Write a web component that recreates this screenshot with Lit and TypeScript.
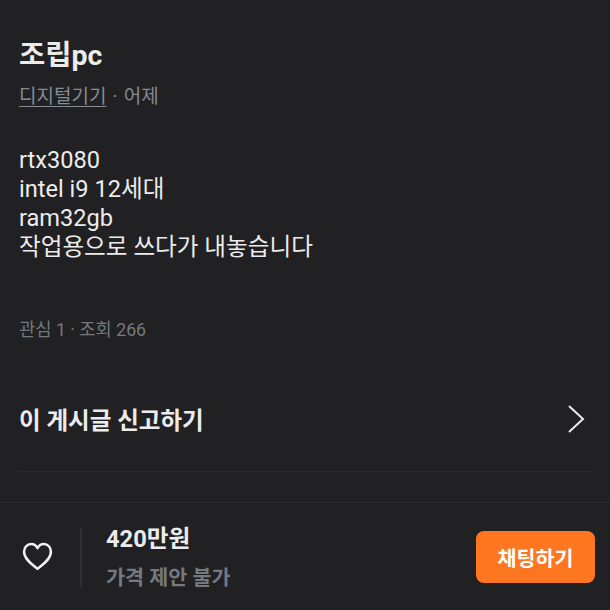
import { LitElement, html, css } from 'lit';
import { customElement } from 'lit/decorators.js';

@customElement('app-root')
export class AppRoot extends LitElement {
  static styles = css`
    :host {
      display: block;
      width: 610px;
      height: 610px;
      background: #212123;
      color: #ececed;
      font-family: Roboto, 'Noto Sans CJK KR', sans-serif;
      overflow: hidden;
    }
    .page {
      height: 610px;
      display: flex;
      flex-direction: column;
    }
    .content {
      flex: 1;
      padding: 38px 16px 0 19px;
      display: flex;
      flex-direction: column;
    }
    h1 {
      margin: 0;
      font-size: 28.5px;
      line-height: 36px;
      font-weight: 700;
    }
    .meta {
      margin-top: 11px;
      font-size: 19px;
      line-height: 24px;
      color: #868b94;
      word-spacing: 1.5px;
    }
    .meta u {
      text-underline-offset: 3px;
    }
    .desc {
      margin-top: 37px;
      font-size: 23.6px;
      line-height: 29px;
      color: #ececed;
    }
    .stats {
      margin-top: 56px;
      font-size: 17.7px;
      line-height: 24px;
      color: #74787f;
    }
    .report {
      margin-top: 30px;
      height: 100px;
      box-sizing: border-box;
      border-bottom: 1px solid #2c2d30;
      display: flex;
      align-items: center;
      justify-content: space-between;
      font-size: 23.5px;
      font-weight: 700;
      padding-bottom: 6px;
    }
    .report svg {
      display: block;
      margin-right: 9px;
    }
    .bar {
      height: 108px;
      box-sizing: border-box;
      border-top: 1px solid #2c2d30;
      display: flex;
      align-items: center;
      padding: 0 15px 0 22px;
    }
    .heart {
      display: block;
      width: 31px;
      height: 29px;
    }
    .divider {
      width: 2px;
      height: 60px;
      background: #2f3034;
      margin: 0 24px 0 27px;
    }
    .price {
      flex: 1;
      display: flex;
      flex-direction: column;
      gap: 11px;
      padding-top: 2px;
    }
    .amount {
      font-size: 23.7px;
      line-height: 30px;
      font-weight: 700;
    }
    .nego {
      font-size: 20.7px;
      line-height: 26px;
      font-weight: 700;
      color: #74787f;
    }
    .chat {
      width: 119px;
      height: 52px;
      border: none;
      border-radius: 8px;
      background: #ff7620;
      color: #fff;
      font: inherit;
      font-size: 20.6px;
      font-weight: 700;
      padding: 0;
    }
  `;

  render() {
    return html`
      <div class="page">
        <div class="content">
          <h1>조립pc</h1>
          <div class="meta"><u>디지털기기</u> · 어제</div>
          <div class="desc">
            rtx3080<br />intel i9 12세대<br />ram32gb<br />작업용으로 쓰다가 내놓습니다
          </div>
          <div class="stats">관심 1 · 조회 266</div>
          <div class="report">
            <span>이 게시글 신고하기</span>
            <svg width="18" height="30" viewBox="0 0 18 30" fill="none" stroke="#ececed" stroke-width="2">
              <path d="M2 2 L16 15 L2 28" />
            </svg>
          </div>
        </div>
        <div class="bar">
          <svg class="heart" viewBox="0 0 30 28" fill="none" stroke="#f2f2f3" stroke-width="2.4" stroke-linejoin="round">
            <path d="M15 26 C11 22.500 2 17 2 9.500 C2 5 5 2 8.800 2 C11.500 2 13.800 3.500 15 6 C16.200 3.500 18.500 2 21.200 2 C25 2 28 5 28 9.500 C28 17 19 22.500 15 26 Z" />
          </svg>
          <div class="divider"></div>
          <div class="price">
            <div class="amount">420만원</div>
            <div class="nego">가격 제안 불가</div>
          </div>
          <button class="chat">채팅하기</button>
        </div>
      </div>
    `;
  }
}
